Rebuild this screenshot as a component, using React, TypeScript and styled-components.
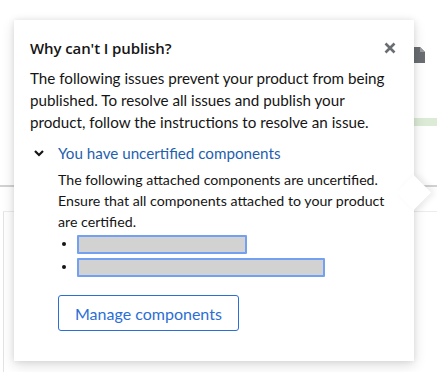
import styled, { createGlobalStyle } from "styled-components";

const GlobalStyle = createGlobalStyle`
  html, body {
    margin: 0;
    background: #fff;
  }
  body {
    font-family: "Lato", "Liberation Sans", sans-serif;
    color: #151515;
  }
`;

const Page = styled.div`
  position: relative;
  width: 437px;
  height: 372px;
  overflow: hidden;
  background: #fff;
`;

const Toolbar = styled.div`
  display: flex;
  justify-content: flex-end;
  height: 118px;
  padding-right: 11px;
  box-sizing: border-box;
`;

const DocIcon = styled.svg`
  margin-top: 45px;
  width: 14px;
  height: 18px;
`;

const ProgressBar = styled.div`
  margin-left: auto;
  width: 60px;
  height: 8px;
  background: #dcebd5;
`;

const Divider = styled.div`
  margin-top: 59px;
  height: 2px;
  background: #d2d2d2;
`;

const Card = styled.div`
  margin: 24px 0 0 3px;
  height: 200px;
  border-left: 1px solid #e3e3e3;
  border-top: 1px solid #ececec;
`;

const Popover = styled.div`
  position: absolute;
  left: 14px;
  top: 20px;
  width: 400px;
  height: 341px;
  box-sizing: border-box;
  padding: 16px 16px;
  background: #fff;
  box-shadow: 0 4px 12px rgba(3, 3, 3, 0.14), 0 0 6px rgba(3, 3, 3, 0.08);
`;

const Arrow = styled.div`
  position: absolute;
  right: -12px;
  top: 160px;
  width: 25px;
  height: 25px;
  background: #fff;
  transform: rotate(45deg);
  box-shadow: 3px -3px 6px rgba(3, 3, 3, 0.08);
`;

const Header = styled.div`
  display: flex;
  align-items: center;
  justify-content: space-between;
`;

const Title = styled.h1`
  margin: 0;
  font-family: "Open Sans", sans-serif;
  font-size: 15px;
  font-weight: 600;
  line-height: 24px;
  letter-spacing: -0.1px;
`;

const CloseButton = styled.button`
  display: flex;
  border: 0;
  background: none;
  padding: 0;
  margin-right: 2px;
  cursor: pointer;
`;

const Intro = styled.p`
  margin: 7px 0 0;
  font-size: 15.2px;
  line-height: 22px;
`;

const Toggle = styled.button`
  display: flex;
  align-items: center;
  gap: 14px;
  margin: 8px 0 0 4px;
  padding: 0;
  border: 0;
  background: none;
  font-family: "Lato", sans-serif;
  font-size: 15.2px;
  line-height: 24px;
  color: #1f5fad;
  cursor: pointer;
`;

const Content = styled.div`
  margin-left: 28px;
  margin-top: 4px;
  font-family: "Lato", sans-serif;
  font-size: 14.2px;
  line-height: 21px;
`;

const List = styled.ul`
  margin: 0;
  padding-left: 19px;
`;

const Item = styled.li`
  height: 23px;
  &::marker {
    font-size: 12px;
  }
`;

const Placeholder = styled.span<{ $width: number }>`
  display: inline-block;
  vertical-align: middle;
  width: ${(p) => p.$width}px;
  height: 15px;
  background: #d2d2d2;
  border: 2px solid #73a0f0;
  border-radius: 1px;
`;

const ManageButton = styled.button`
  margin-top: 17px;
  height: 36px;
  padding: 0 16px;
  background: #fff;
  border: 1px solid #2b6ed6;
  border-radius: 3px;
  font-family: "Lato", sans-serif;
  font-size: 16px;
  color: #2b6ed6;
  cursor: pointer;
`;

export default function App() {
  return (
    <Page>
      <GlobalStyle />
      <Toolbar>
        <DocIcon viewBox="0 0 14 18">
          <path d="M0 2h8l5 5v11H0z" fill="#6a6e73" />
          <path d="M8 2v5h5" fill="#9a9da0" />
        </DocIcon>
      </Toolbar>
      <ProgressBar />
      <Divider />
      <Card />
      <Popover role="dialog">
        <Arrow />
        <Header>
          <Title>Why can't I publish?</Title>
          <CloseButton aria-label="Close">
            <svg width="12" height="12" viewBox="0 0 12 12">
              <path
                d="M1.5 1.5l9 9M10.5 1.5l-9 9"
                stroke="#6a6e73"
                strokeWidth="2.6"
                strokeLinecap="butt"
              />
            </svg>
          </CloseButton>
        </Header>
        <Intro>
          The following issues prevent your product from being published. To
          resolve all issues and publish your product, follow the instructions
          to resolve an issue.
        </Intro>
        <Toggle>
          <svg width="10" height="8" viewBox="0 0 10 8">
            <path d="M1 2l4 4 4-4" stroke="#151515" strokeWidth="2.2" fill="none" />
          </svg>
          You have uncertified components
        </Toggle>
        <Content>
          The following attached components are uncertified. Ensure that all
          components attached to your product are certified.
          <List>
            <Item>
              <Placeholder $width={166} />
            </Item>
            <Item>
              <Placeholder $width={244} />
            </Item>
          </List>
          <ManageButton>Manage components</ManageButton>
        </Content>
      </Popover>
    </Page>
  );
}
